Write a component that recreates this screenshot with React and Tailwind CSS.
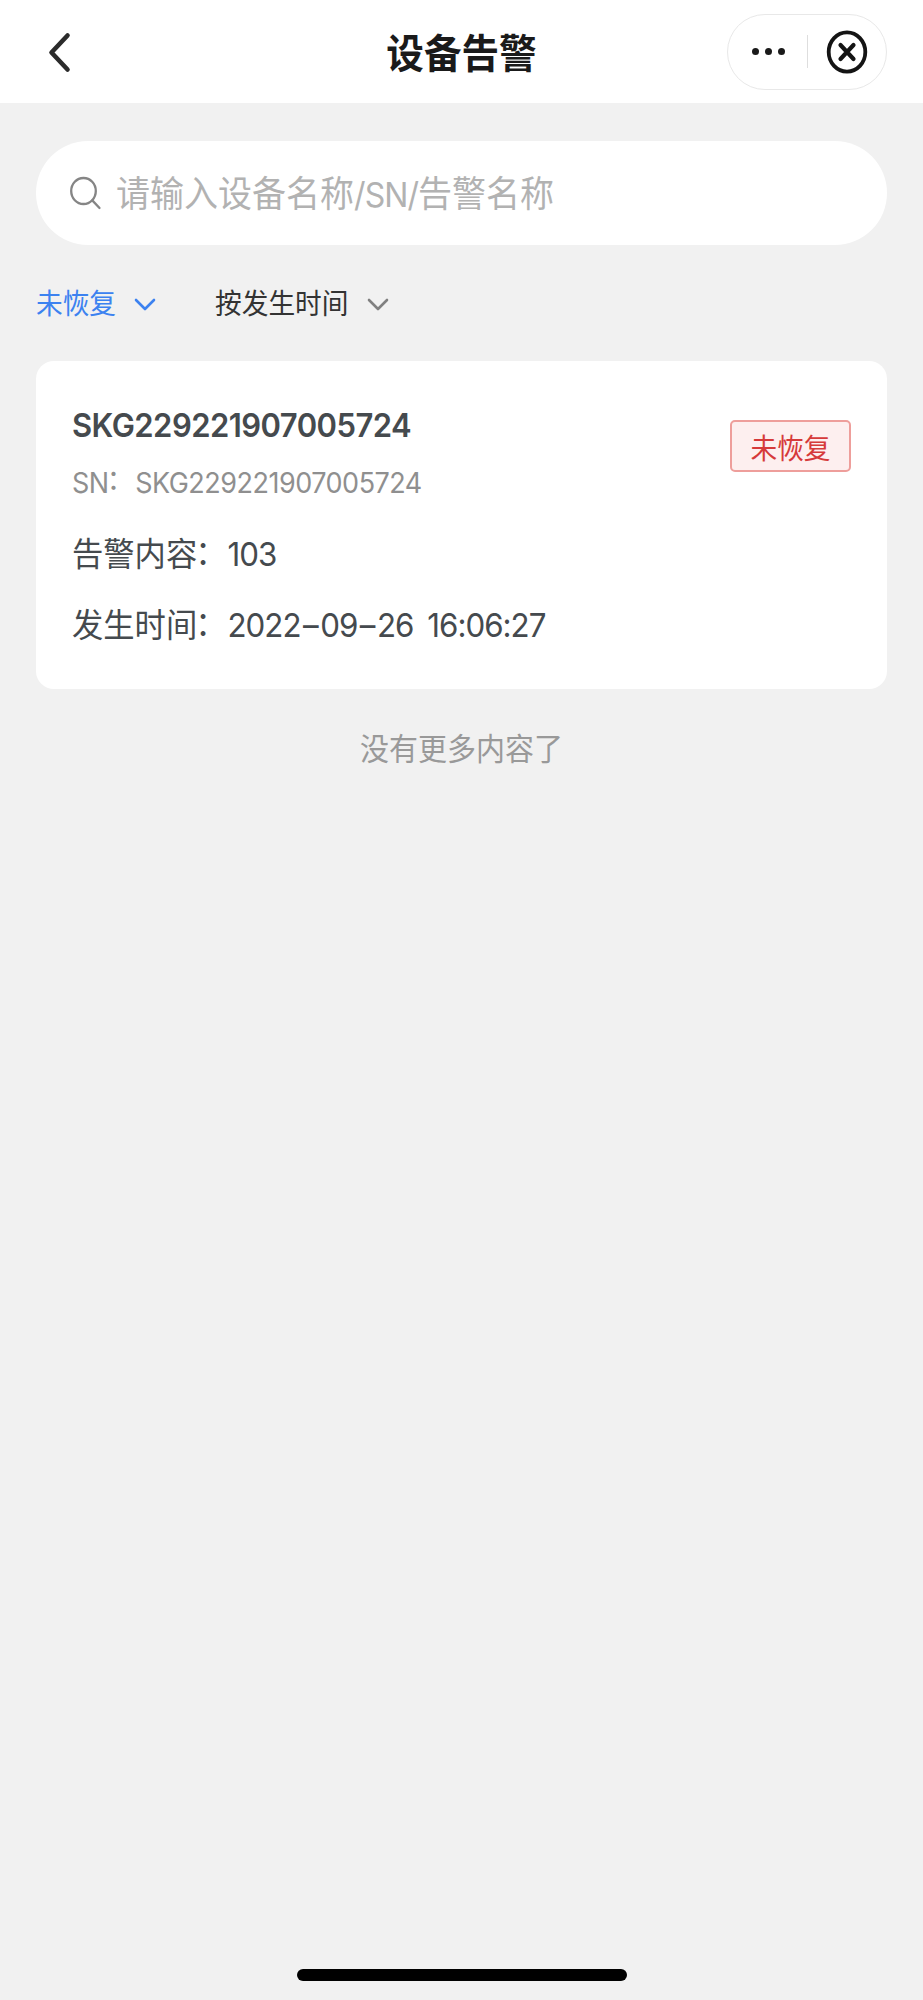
const alarms = [
  {
    name: "SKG229221907005724",
    sn: "SKG229221907005724",
    status: "未恢复",
    content: "103",
    time: "2022–09–26 16:06:27",
  },
];

export default function App() {
  return (
    <div
      lang="zh-CN"
      className="flex h-[2000px] w-[923px] flex-col bg-[#f1f1f1] font-['Inter','Noto_Sans_CJK_SC',sans-serif]"
    >
      <NavBar title="设备告警" />

      <main className="flex flex-1 flex-col px-9 pt-[38px]">
        <SearchBox />

        {/* Filters */}
        <div className="mt-[38px] flex h-[40px] items-center">
          <Filter label="未恢复" active />
          <Filter label="按发生时间" />
        </div>

        <div className="mt-[38px] flex flex-col gap-6">
          {alarms.map((alarm) => (
            <AlarmCard key={alarm.sn} alarm={alarm} />
          ))}
        </div>

        <p className="mt-[40px] scale-y-[1.06] text-center text-[29px] leading-[40px] text-[#999]">
          没有更多内容了
        </p>
      </main>

      {/* Home indicator */}
      <div className="mb-[19px] h-3 w-[330px] self-center rounded-full bg-black" />
    </div>
  );
}

function NavBar({ title }) {
  return (
    <header className="grid h-[103px] grid-cols-[1fr_auto_1fr] items-center bg-white px-9">
      <button className="ml-2 justify-self-start">
        <svg width="30" height="44" viewBox="0 0 30 44" fill="none" stroke="#2b2b2b" strokeWidth="4.6" strokeLinecap="round" strokeLinejoin="round">
          <path d="M23.5 5.5 7.5 22.5 23.5 39.5" />
        </svg>
      </button>
      <h1 className="scale-y-[1.06] pt-[5px] text-[37.6px] leading-[50px] font-bold text-[#1a1a1a]">{title}</h1>
      <div className="flex h-[76px] w-[160px] items-center justify-self-end rounded-full border-[1.5px] border-[#e8e8e8] pl-px">
        <button className="flex flex-1 justify-center gap-1.5">
          <span className="size-[7px] rounded-full bg-[#1a1a1a]" />
          <span className="size-[7px] rounded-full bg-[#1a1a1a]" />
          <span className="size-[7px] rounded-full bg-[#1a1a1a]" />
        </button>
        <span className="h-[33px] w-px bg-[#dedede]" />
        <button className="flex flex-1 justify-center">
          <svg width="42" height="44" viewBox="0 0 42 44" fill="none" stroke="#141414" strokeWidth="3.8" strokeLinecap="round">
            <ellipse cx="21" cy="22" rx="18.3" ry="19.6" />
            <path d="M14.5 15 27.5 29M27.5 15 14.5 29" strokeWidth="4.2" />
          </svg>
        </button>
      </div>
    </header>
  );
}

function SearchBox() {
  return (
    <div className="flex h-[104px] items-center rounded-full bg-white pl-[33px]">
      <svg width="34" height="36" viewBox="0 0 34 36" fill="none" stroke="#858585" strokeWidth="2.3" strokeLinecap="round">
        <ellipse cx="14.5" cy="16" rx="12.3" ry="13" />
        <path d="M23.3 25.4 30.5 33" />
      </svg>
      <span className="ml-[13px] scale-y-[1.06] pt-[2px] text-[34px] leading-[48px] text-[#b2b2b2]">
        请输入设备名称<span className="text-[32px] tracking-[-0.9px]">/SN/</span>告警名称
      </span>
    </div>
  );
}

function Filter({ label, active = false }) {
  return (
    <button className={`mr-[58px] flex items-center text-[26.7px] leading-[40px] ${active ? "text-[#3c82f0]" : "text-[#333]"}`}>
      <span className="scale-y-[1.06]">{label}</span>
      <svg
        className="mt-[3px] ml-[17px]"
        width="24"
        height="16"
        viewBox="0 0 24 16"
        fill="none"
        stroke={active ? "#3c82f0" : "#808080"}
        strokeWidth="2.6"
        strokeLinecap="round"
        strokeLinejoin="round"
      >
        <path d="M3 3 12 12 21 3" />
      </svg>
    </button>
  );
}

function Colon() {
  return <span className="inline-block -translate-x-0.5 -translate-y-0.5">：</span>;
}

function AlarmCard({ alarm }) {
  return (
    <section className="h-[328px] rounded-[18px] bg-white px-9 pt-[40px]">
      <div className="flex items-start justify-between">
        <div className="flex flex-col items-start">
          <h2 className="scale-y-[1.06] text-[31px] leading-[48px] font-semibold tracking-[-0.55px] text-[#454a4e]">
            {alarm.name}
          </h2>
          <p className="mt-[14px] scale-y-[1.06] text-[27px] leading-[40px] tracking-[-0.5px] text-[#8f8f8f]">
            SN<Colon />{alarm.sn}
          </p>
        </div>
        <span className="mt-[19px] flex h-[52px] w-[121px] items-center justify-center rounded-[5px] border-2 border-[#ee9e9b] bg-[#fdefef] pt-[3px] text-[26.7px] leading-[40px] text-[#d63a3a]">
          <span className="scale-y-[1.06]">{alarm.status}</span>
        </span>
      </div>
      <div className="mt-[29px] flex flex-col gap-[27px]">
        <InfoRow label="告警内容" value={alarm.content} />
        <InfoRow label="发生时间" value={alarm.time} />
      </div>
    </section>
  );
}

function InfoRow({ label, value }) {
  const parts = value.split("–");

  return (
    <div className="flex scale-y-[1.06] items-center text-[31.3px] leading-[44px] text-[#454a4e]">
      <span>
        {label}
        <Colon />
      </span>
      <span className="-ml-px tracking-[-1px] [word-spacing:6px]">
        {parts.map((part, i) => (
          <span key={i}>
            {i > 0 && <span className="mx-[2.5px]">–</span>}
            {part}
          </span>
        ))}
      </span>
    </div>
  );
}
